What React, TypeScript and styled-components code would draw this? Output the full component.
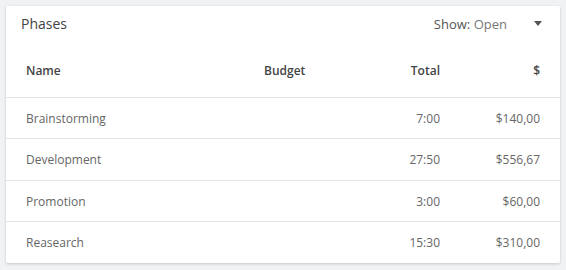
import styled, { createGlobalStyle } from "styled-components";

const GlobalStyle = createGlobalStyle`
    body {
        margin: 0;
        background: #f1f2f4;
        font-family: "Open Sans", "Liberation Sans", sans-serif;
    }
`;

const Page = styled.div`
    padding: 6px;
    height: 270px;
    box-sizing: border-box;
`;

const Card = styled.div`
    width: 554px;
    height: 257px;
    background: #fff;
    border-radius: 2px;
    box-shadow: 0 1px 3px rgba(0, 0, 0, 0.18);
    display: flex;
    flex-direction: column;
`;

const TitleBar = styled.div`
    height: 36px;
    display: flex;
    align-items: center;
    justify-content: space-between;
    padding: 0 18px 0 15px;
`;

const Title = styled.h2`
    margin: 0;
    font-size: 14px;
    font-weight: 400;
    color: #444;
`;

const Filter = styled.div`
    display: flex;
    align-items: center;
    gap: 27px;
    font-size: 13px;
    color: #777;
`;

const FilterLabel = styled.span`
    color: #555;
`;

const Caret = styled.span`
    width: 0;
    height: 0;
    border-left: 4px solid transparent;
    border-right: 4px solid transparent;
    border-top: 5px solid #555;
`;

const Row = styled.div<{ $head?: boolean }>`
    display: grid;
    grid-template-columns: 238px 76px 100px 100px;
    align-items: center;
    height: ${(p) => (p.$head ? "54px" : "41px")};
    padding: ${(p) => (p.$head ? "2px 20px 0" : "0 20px")};
    border-bottom: 1px solid #e4e4e4;
    font-size: 12px;
    font-weight: ${(p) => (p.$head ? 600 : 400)};
    color: ${(p) => (p.$head ? "#444" : "#666")};

    &:last-child {
        border-bottom: none;
    }
`;

const Cell = styled.span<{ $right?: boolean }>`
    text-align: ${(p) => (p.$right ? "right" : "left")};
`;

const phases = [
    { name: "Brainstorming", total: "7:00", cost: "$140,00" },
    { name: "Development", total: "27:50", cost: "$556,67" },
    { name: "Promotion", total: "3:00", cost: "$60,00" },
    { name: "Reasearch", total: "15:30", cost: "$310,00" },
];

export default function App() {
    return (
        <Page>
            <GlobalStyle />
            <Card>
                <TitleBar>
                    <Title>Phases</Title>
                    <Filter>
                        <span>
                            <FilterLabel>Show:</FilterLabel> Open
                        </span>
                        <Caret />
                    </Filter>
                </TitleBar>
                <Row $head>
                    <Cell>Name</Cell>
                    <Cell>Budget</Cell>
                    <Cell $right>Total</Cell>
                    <Cell $right>$</Cell>
                </Row>
                {phases.map((p) => (
                    <Row key={p.name}>
                        <Cell>{p.name}</Cell>
                        <Cell />
                        <Cell $right>{p.total}</Cell>
                        <Cell $right>{p.cost}</Cell>
                    </Row>
                ))}
            </Card>
        </Page>
    );
}
